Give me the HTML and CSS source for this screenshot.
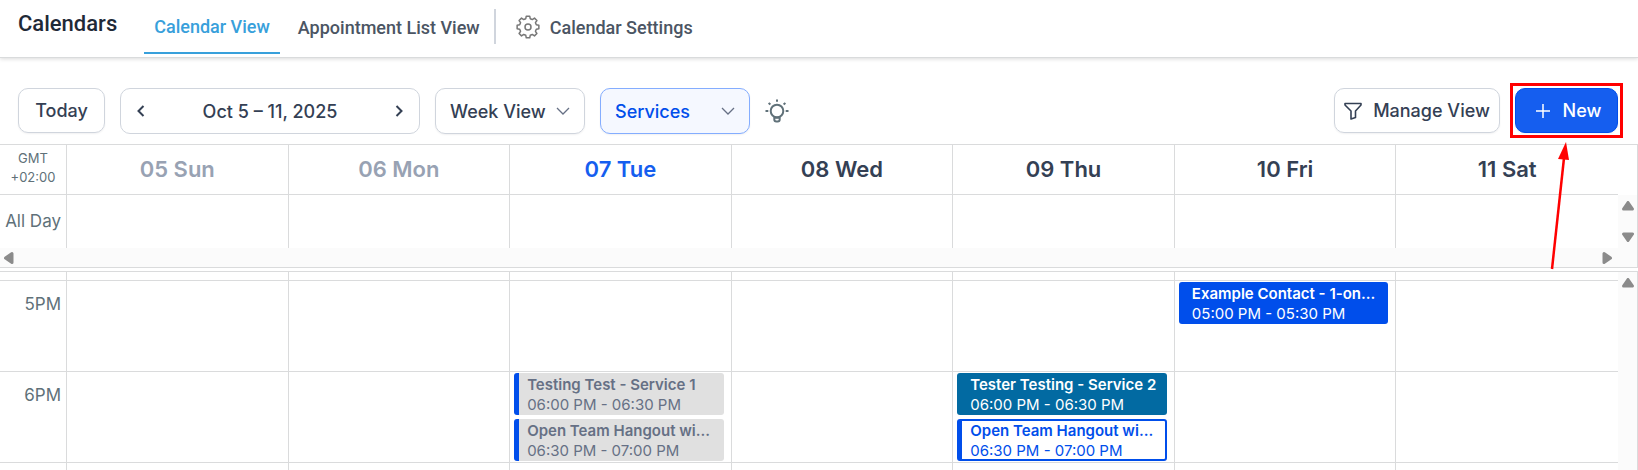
FILE: index.html
```html
<!DOCTYPE html>
<html lang="en">
<head>
    <meta charset="UTF-8">
    <meta name="viewport" content="width=device-width, initial-scale=1.0">
    <title>Calendars</title>
    <link rel="stylesheet" href="styles.css">
</head>
<body>
    <header class="topbar">
        <h1>Calendars</h1>
        <nav class="tabs">
            <a href="#" class="tab active">Calendar View</a>
            <a href="#" class="tab">Appointment List View</a>
            <span class="divider"></span>
            <a href="#" class="tab settings">
                <svg class="gear" viewBox="0 0 24 24" width="24" height="24">
                    <path d="M9.770 3.690 10.280 1.140H13.720L14.230 3.690 16.300 4.550 18.470 3.100 20.900 5.530 19.450 7.700 20.310 9.770 22.860 10.280V13.720L20.310 14.230 19.450 16.300 20.900 18.470 18.470 20.900 16.300 19.450 14.230 20.310 13.720 22.860H10.280L9.770 20.310 7.700 19.450 5.530 20.900 3.100 18.470 4.550 16.300 3.690 14.230 1.140 13.720V10.280L3.690 9.770 4.550 7.700 3.100 5.530 5.530 3.100 7.700 4.550z"/>
                    <circle cx="12" cy="12" r="3"/>
                </svg>
                Calendar Settings
            </a>
        </nav>
    </header>

    <main class="calendar">
        <div class="toolbar">
            <button class="btn today">Today</button>
            <div class="date-nav">
                <button class="arrow-btn" aria-label="Previous week">
                    <svg viewBox="0 0 8 14" width="8" height="14"><path d="M6.500 2 1.500 7l5 5"/></svg>
                </button>
                <span>Oct 5 – 11, 2025</span>
                <button class="arrow-btn" aria-label="Next week">
                    <svg viewBox="0 0 8 14" width="8" height="14"><path d="M1.500 2l5 5-5 5"/></svg>
                </button>
            </div>
            <div class="dropdown">
                <select aria-label="View">
                    <option>Week View</option>
                    <option>Day View</option>
                    <option>Month View</option>
                </select>
                <svg class="chevron" viewBox="0 0 14 8" width="14" height="8"><path d="M1 1l6 6 6-6"/></svg>
            </div>
            <div class="dropdown selected">
                <select aria-label="Calendar type">
                    <option>Services</option>
                </select>
                <svg class="chevron" viewBox="0 0 14 8" width="14" height="8"><path d="M1 1l6 6 6-6"/></svg>
            </div>
            <button class="icon-btn" aria-label="Tips">
                <svg viewBox="0 0 24 24" width="24" height="24">
                    <circle cx="12" cy="12" r="6.300"/>
                    <path d="M12 .500v2.300M.500 12h2.800M20.700 12h2.800M3.600 4l1.800 1.500M20.400 4l-1.800 1.500M9.300 17.500v3a2 2 0 0 0 2 2h1.400a2 2 0 0 0 2-2v-3M10 18.800h4"/>
                </svg>
            </button>
            <button class="btn manage">
                <svg viewBox="0 0 18 18" width="18" height="18"><path d="M1 1.500h16v1.500l-5.500 6v6.500l-4.500 1.500V9L1 3z"/></svg>
                Manage View
            </button>
            <div class="highlight">
                <button class="btn new">
                    <svg viewBox="0 0 14 14" width="14" height="14"><path d="M7 0v14M0 7h14"/></svg>
                    New
                </button>
                <svg class="pointer" viewBox="0 0 24 128" width="24" height="128">
                    <path d="M5 127 17 16" />
                    <polygon points="19,0 22,18 11,17"/>
                </svg>
            </div>
        </div>

        <div class="days">
            <table>
                <colgroup><col class="time-col"><col span="7"></colgroup>
                <thead>
                    <tr>
                        <th class="zone">GMT<br>+02:00</th>
                        <th class="past">05 Sun</th>
                        <th class="past">06 Mon</th>
                        <th class="current">07 Tue</th>
                        <th>08 Wed</th>
                        <th>09 Thu</th>
                        <th>10 Fri</th>
                        <th>11 Sat</th>
                    </tr>
                </thead>
                <tbody>
                    <tr class="all-day">
                        <th>All Day</th>
                        <td></td><td></td><td></td><td></td><td></td><td></td><td></td>
                    </tr>
                </tbody>
            </table>
            <div class="v-scroll">
                <svg viewBox="0 0 14 10" width="14" height="10"><path d="M7 1.500l4.500 6.500h-9z"/></svg>
                <svg viewBox="0 0 14 10" width="14" height="10"><path d="M7 8.500l4.500-6.500h-9z"/></svg>
            </div>
            <div class="h-scroll">
                <svg viewBox="0 0 10 14" width="10" height="14"><path d="M1.500 7l6.500-4.500v9z"/></svg>
                <svg viewBox="0 0 10 14" width="10" height="14"><path d="M8.500 7L2 2.500v9z"/></svg>
            </div>
        </div>

        <div class="hours">
            <table>
                <colgroup><col class="time-col"><col span="7"></colgroup>
                <tbody>
                    <tr class="partial">
                        <th></th>
                        <td></td><td></td><td></td><td></td><td></td><td></td><td></td>
                    </tr>
                    <tr>
                        <th>5PM</th>
                        <td></td><td></td><td></td><td></td><td></td>
                        <td>
                            <div class="event blue"><strong>Example Contact - 1-on...</strong><span>05:00 PM - 05:30 PM</span></div>
                        </td>
                        <td></td>
                    </tr>
                    <tr>
                        <th>6PM</th>
                        <td></td><td></td>
                        <td>
                            <div class="event done"><strong>Testing Test - Service 1</strong><span>06:00 PM - 06:30 PM</span></div>
                            <div class="event done"><strong>Open Team Hangout wi...</strong><span>06:30 PM - 07:00 PM</span></div>
                        </td>
                        <td></td>
                        <td>
                            <div class="event teal"><strong>Tester Testing - Service 2</strong><span>06:00 PM - 06:30 PM</span></div>
                            <div class="event open"><strong>Open Team Hangout wi...</strong><span>06:30 PM - 07:00 PM</span></div>
                        </td>
                        <td></td><td></td>
                    </tr>
                    <tr>
                        <th></th>
                        <td></td><td></td><td></td><td></td><td></td><td></td><td></td>
                    </tr>
                </tbody>
            </table>
            <div class="v-scroll">
                <svg viewBox="0 0 14 10" width="14" height="10"><path d="M7 1.500l4.500 6.500h-9z"/></svg>
            </div>
        </div>
    </main>
</body>
</html>
```
FILE: styles.css
```css
:root {
    --line: #dadbdc;
    --border: #d0d5dd;
    --text: #344054;
    --muted: #607179;
    --blue: #155eef;
    --event-blue: #004eeb;
    --red: #ff0000;
}

* {
    margin: 0;
    padding: 0;
    box-sizing: border-box;
}

body {
    height: 100vh;
    display: flex;
    flex-direction: column;
    overflow: hidden;
    font-family: Inter, sans-serif;
    color: var(--text);
    background: #fff;
}

button,
select {
    font: inherit;
    color: inherit;
    background: none;
    border: none;
    cursor: pointer;
}

svg {
    flex: none;
    fill: none;
    stroke: currentColor;
}

/* Top bar */
.topbar {
    display: flex;
    height: 58px;
    padding-left: 18px;
    font-family: Roboto, sans-serif;
    border-bottom: 1px solid #d9dbdc;
    box-shadow: 0 1px 4px rgba(0, 0, 0, 0.15);
}

.topbar h1 {
    margin-right: 27px;
    font-size: 22px;
    font-weight: 500;
    line-height: 48px;
    color: #1f2937;
}

.tabs {
    display: flex;
    align-items: flex-start;
}

.tab {
    display: flex;
    align-items: center;
    height: 54px;
    padding: 0 14px 0 18px;
    font-size: 18px;
    font-weight: 500;
    color: #4b5563;
    text-decoration: none;
}

.tab.active {
    padding: 0 10px;
    color: #38a0db;
    border-bottom: 2px solid #38a0db;
}

.divider {
    width: 2px;
    height: 35px;
    margin-top: 9px;
    background: var(--border);
}

.settings {
    gap: 10px;
    padding-left: 20px;
}

.gear {
    color: #777;
    stroke-width: 1.5;
    stroke-linejoin: round;
}

/* Toolbar */
.calendar {
    flex: 1;
    min-height: 0;
    display: flex;
    flex-direction: column;
}

.toolbar {
    display: flex;
    align-items: flex-start;
    gap: 15px;
    padding: 30px 20px 10px 18px;
    font-size: 18px;
    font-weight: 500;
}

.btn,
.date-nav,
.dropdown {
    display: flex;
    align-items: center;
    height: 46px;
    border: 1px solid var(--border);
    border-radius: 10px;
}

.btn {
    height: 45px;
    justify-content: center;
    box-shadow: 0 1px 2px rgba(16, 24, 40, 0.06);
}

.today {
    width: 87px;
}

.date-nav {
    width: 300px;
    justify-content: space-between;
    padding: 0 16px;
}

.arrow-btn {
    display: flex;
    stroke-width: 2;
}

.dropdown {
    position: relative;
    width: 150px;
    box-shadow: 0 1px 2px rgba(16, 24, 40, 0.06);
}

.dropdown select {
    width: 100%;
    height: 100%;
    padding-left: 14px;
    appearance: none;
    outline: none;
}

.chevron {
    position: absolute;
    right: 14px;
    color: #667085;
    stroke-width: 1.3;
    pointer-events: none;
}

.dropdown.selected {
    color: var(--event-blue);
    background: #f5f8ff;
    border-color: #84adff;
}

.icon-btn {
    display: flex;
    align-items: center;
    height: 46px;
    color: var(--muted);
    stroke-width: 2;
}

.manage {
    gap: 11px;
    width: 166px;
    margin-left: auto;
}

.manage svg {
    stroke-width: 1.6;
    stroke-linejoin: round;
}

.highlight {
    position: relative;
    outline: 3px solid var(--red);
    outline-offset: 2px;
}

.new {
    gap: 13px;
    width: 103px;
    padding-left: 4px;
    color: #fff;
    background: var(--blue);
    border-color: var(--event-blue);
}

.new svg {
    stroke-width: 1.5;
}

.pointer {
    position: absolute;
    top: 54px;
    left: 32px;
    z-index: 1;
    stroke: var(--red);
    stroke-width: 2.5;
    pointer-events: none;
}

.pointer polygon {
    fill: var(--red);
    stroke: none;
}

/* Week grid */
table {
    width: 100%;
    table-layout: fixed;
    border-collapse: separate;
    border-spacing: 0;
}

.time-col {
    width: 67px;
}

th,
td {
    border-right: 1px solid var(--line);
    border-bottom: 1px solid var(--line);
}

th:last-child,
td:last-child {
    border-right: none;
}

tbody th {
    padding-right: 5px;
    font-size: 17px;
    font-weight: 400;
    text-align: right;
    color: var(--muted);
}

.days,
.hours {
    display: grid;
    grid-template-columns: 1fr 19px;
    border-top: 1px solid var(--line);
    border-right: 1px solid var(--line);
}

.days {
    border-bottom: 1px solid var(--line);
}

thead th {
    height: 50px;
    padding-bottom: 2px;
    font-size: 22px;
    font-weight: 600;
}

thead .past {
    color: #98a2b3;
}

thead .current {
    color: var(--blue);
}

thead .zone {
    padding-bottom: 3px;
    font-size: 13px;
    font-weight: 400;
    line-height: 19px;
    color: var(--muted);
}

.all-day th,
.all-day td {
    height: 53px;
    padding-bottom: 1px;
    border-bottom: none;
}

.v-scroll {
    display: flex;
    flex-direction: column;
    align-items: center;
    justify-content: space-between;
    padding: 6px 0;
    background: #fbfbfb;
}

.days .v-scroll {
    margin-top: 50px;
}

.h-scroll {
    grid-column: 1 / -1;
    display: flex;
    align-items: center;
    justify-content: space-between;
    height: 19px;
    padding: 0 25px 0 4px;
    background: #fbfbfb;
}

.v-scroll svg,
.h-scroll svg {
    fill: #8b8b8b;
    stroke: #8b8b8b;
    stroke-width: 3;
    stroke-linejoin: round;
}

.hours {
    flex: 1;
    min-height: 0;
    margin-top: 3px;
    overflow: hidden;
}

.hours th,
.hours td {
    height: 91px;
    vertical-align: top;
}

.hours th {
    padding-top: 13px;
}

.hours .partial th,
.hours .partial td {
    height: 9px;
    padding: 0;
}

.hours td {
    padding: 1px 7px 0 4px;
}

/* Events */
.event {
    height: 42px;
    padding: 2px 8px 0 13px;
    font-size: 15px;
    line-height: 20px;
    border-radius: 3px;
}

.event + .event {
    margin-top: 4px;
}

.event strong,
.event span {
    display: block;
    overflow: hidden;
    white-space: nowrap;
    text-overflow: ellipsis;
}

.event strong {
    font-weight: 600;
}

.event.blue {
    color: #fff;
    background: var(--event-blue);
}

.event.teal {
    color: #fff;
    background: #026aa2;
}

.event.done {
    padding-left: 8px;
    color: #667085;
    background: #e0e0e0;
    border-left: 5px solid var(--event-blue);
}

.event.open {
    padding: 0 6px 0 8px;
    color: var(--event-blue);
    background: #fff;
    border: 2px solid var(--event-blue);
    border-left-width: 5px;
}
```
